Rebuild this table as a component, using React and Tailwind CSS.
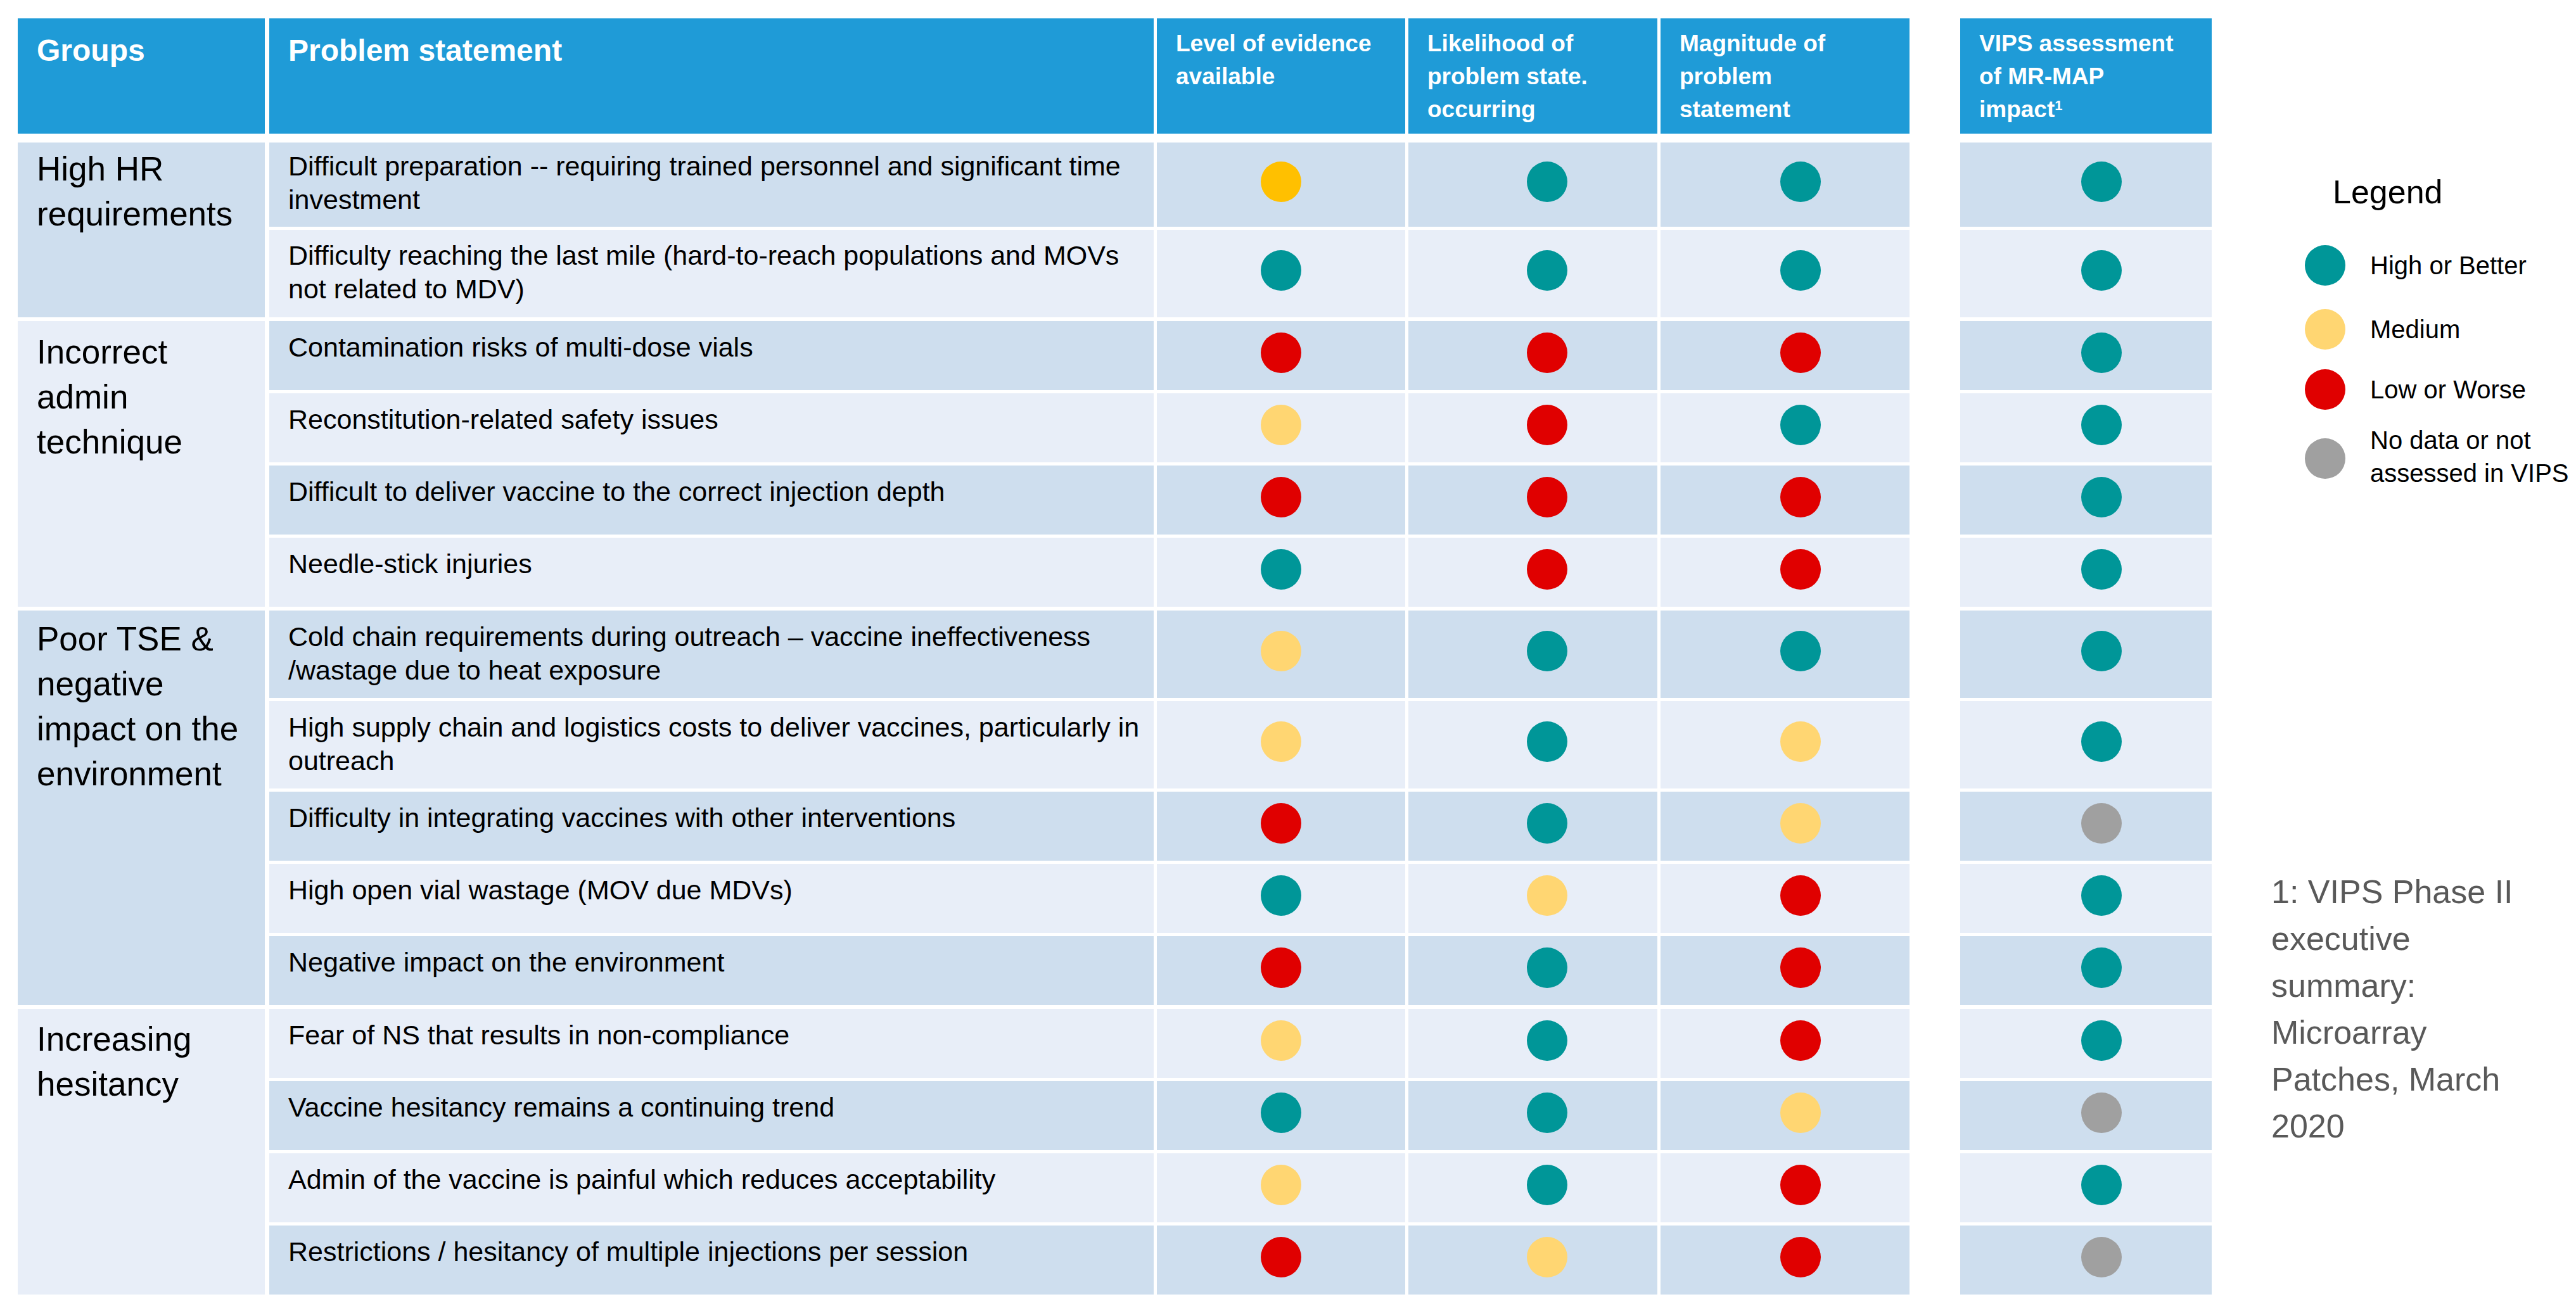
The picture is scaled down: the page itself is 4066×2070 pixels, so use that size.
import React from "react";

const DARK = "bg-[#cedeee]";
const LIGHT = "bg-[#e8eef8]";

const DOT = {
  T: "bg-[#009698]",
  R: "bg-[#e00000]",
  Y: "bg-[#ffd672]",
  B: "bg-[#ffc000]",
  G: "bg-[#a0a0a0]",
};

const H = {
  133: "h-[133px]",
  138: "h-[138px]",
  109: "h-[109px]",
};

const groups = [
  {
    lines: ["High HR", "requirements"],
    pt: "pt-[6px]",
    bg: DARK,
    rows: [
      { text: ["Difficult preparation -- requiring trained personnel and significant time", "investment"], h: 133, pt: "pt-[11px]", d: ["B", "T", "T", "T"] },
      { text: ["Difficulty reaching the last mile (hard-to-reach populations and MOVs", "not related to MDV)"], h: 138, pt: "pt-[14px]", d: ["T", "T", "T", "T"] },
    ],
  },
  {
    lines: ["Incorrect", "admin", "technique"],
    pt: "pt-[13px]",
    bg: LIGHT,
    rows: [
      { text: ["Contamination risks of multi-dose vials"], h: 109, d: ["R", "R", "R", "T"] },
      { text: ["Reconstitution-related safety issues"], h: 109, d: ["Y", "R", "T", "T"] },
      { text: ["Difficult to deliver vaccine to the correct injection depth"], h: 109, d: ["R", "R", "R", "T"] },
      { text: ["Needle-stick injuries"], h: 109, d: ["T", "R", "R", "T"] },
    ],
  },
  {
    lines: ["Poor TSE &", "negative", "impact on the", "environment"],
    pt: "pt-[9px]",
    bg: DARK,
    rows: [
      { text: ["Cold chain requirements during outreach \u2013 vaccine ineffectiveness", "/wastage due to heat exposure"], h: 138, d: ["Y", "T", "T", "T"] },
      { text: ["High supply chain and logistics costs to deliver vaccines, particularly in", "outreach"], h: 138, d: ["Y", "T", "Y", "T"] },
      { text: ["Difficulty in integrating vaccines with other interventions"], h: 109, d: ["R", "T", "Y", "G"] },
      { text: ["High open vial wastage (MOV due MDVs)"], h: 109, d: ["T", "Y", "R", "T"] },
      { text: ["Negative impact on the environment"], h: 109, d: ["R", "T", "R", "T"] },
    ],
  },
  {
    lines: ["Increasing", "hesitancy"],
    pt: "pt-[12px]",
    bg: LIGHT,
    rows: [
      { text: ["Fear of NS that results in non-compliance"], h: 109, d: ["Y", "T", "R", "T"] },
      { text: ["Vaccine hesitancy remains a continuing trend"], h: 109, d: ["T", "T", "Y", "G"] },
      { text: ["Admin of the vaccine is painful which reduces acceptability"], h: 109, d: ["Y", "T", "R", "T"] },
      { text: ["Restrictions / hesitancy of multiple injections per session"], h: 109, d: ["R", "Y", "R", "G"] },
    ],
  },
];

function Dot({ c }) {
  return <div className={`w-[64px] h-[64px] rounded-full shrink-0 ${DOT[c]}`} />;
}

function Row({ row, bg }) {
  return (
    <div className={`flex ${H[row.h]}`}>
      <div className={`w-[1396px] ${bg} pl-[30px] ${row.pt || "pt-[15px]"} text-[43px] leading-[53px] text-black whitespace-nowrap`}>
        {row.text.map((t, i) => (
          <div key={i}>{t}</div>
        ))}
      </div>
      <div className={`ml-[5px] w-[392px] ${bg} flex items-center justify-center pb-[10px]`}>
        <Dot c={row.d[0]} />
      </div>
      <div className={`ml-[5px] w-[393px] ${bg} flex items-center justify-center pb-[10px] pl-[44px]`}>
        <Dot c={row.d[1]} />
      </div>
      <div className={`ml-[5px] w-[393px] ${bg} flex items-center justify-center pb-[10px] pl-[48px]`}>
        <Dot c={row.d[2]} />
      </div>
      <div className={`ml-[80px] w-[397px] ${bg} flex items-center justify-center pb-[10px] pl-[49px]`}>
        <Dot c={row.d[3]} />
      </div>
    </div>
  );
}

function HeadSmall({ w, ml, children }) {
  return (
    <div className={`${w} ${ml} bg-[#1f9bd7] text-white font-bold text-[37px] leading-[52px] pl-[30px] pt-[14px]`}>
      {children}
    </div>
  );
}

export default function App() {
  let rowIndex = 0;
  return (
    <div className="w-[4066px] h-[2070px] bg-white flex font-['Liberation_Sans',Arial,sans-serif] overflow-hidden">
      <div className="pl-[28px] pt-[29px] flex flex-col shrink-0">
        <div className="flex h-[182px]">
          <div className="w-[390px] bg-[#1f9bd7] text-white font-bold text-[48px] leading-[60px] pl-[30px] pt-[21px]">
            Groups
          </div>
          <div className="ml-[7px] w-[1396px] bg-[#1f9bd7] text-white font-bold text-[48px] leading-[60px] pl-[30px] pt-[21px]">
            Problem statement
          </div>
          <HeadSmall w="w-[392px]" ml="ml-[5px]">
            <div>Level of evidence</div>
            <div>available</div>
          </HeadSmall>
          <HeadSmall w="w-[393px]" ml="ml-[5px]">
            <div>Likelihood of</div>
            <div>problem state.</div>
            <div>occurring</div>
          </HeadSmall>
          <HeadSmall w="w-[393px]" ml="ml-[5px]">
            <div>Magnitude of</div>
            <div>problem</div>
            <div>statement</div>
          </HeadSmall>
          <HeadSmall w="w-[397px]" ml="ml-[80px]">
            <div>VIPS assessment</div>
            <div>of MR-MAP</div>
            <div>
              impact<sup className="text-[22px]">1</sup>
            </div>
          </HeadSmall>
        </div>

        <div className="mt-[14px] flex flex-col gap-[6px]">
          {groups.map((g, gi) => (
            <div key={gi} className="flex">
              <div className={`w-[390px] ${g.bg} pl-[30px] ${g.pt} text-[53px] leading-[71px] text-black whitespace-nowrap`}>
                {g.lines.map((l, i) => (
                  <div key={i}>{l}</div>
                ))}
              </div>
              <div className="ml-[7px] flex flex-col gap-[5px]">
                {g.rows.map((r, ri) => {
                  const bg = rowIndex % 2 === 0 ? DARK : LIGHT;
                  rowIndex += 1;
                  return <Row key={ri} row={r} bg={bg} />;
                })}
              </div>
            </div>
          ))}
        </div>
      </div>

      <div className="ml-[94px] pt-[273px] flex flex-col shrink-0 text-black">
        <div className="pl-[97px] text-[52px] leading-[60px]">Legend</div>

        <div className="mt-[54px] pl-[53px] flex items-center">
          <div className="w-[64px] h-[64px] rounded-full bg-[#009698] shrink-0" />
          <div className="ml-[39px] text-[40px] leading-[52px] whitespace-nowrap">High or Better</div>
        </div>
        <div className="mt-[37px] pl-[53px] flex items-center">
          <div className="w-[64px] h-[64px] rounded-full bg-[#ffd672] shrink-0" />
          <div className="ml-[39px] text-[40px] leading-[52px] whitespace-nowrap">Medium</div>
        </div>
        <div className="mt-[31px] pl-[53px] flex items-center">
          <div className="w-[64px] h-[64px] rounded-full bg-[#e00000] shrink-0" />
          <div className="ml-[39px] text-[40px] leading-[52px] whitespace-nowrap">Low or Worse</div>
        </div>
        <div className="mt-[22px] pl-[53px] flex items-center">
          <div className="w-[64px] h-[64px] rounded-full bg-[#a0a0a0] shrink-0 mt-[6px]" />
          <div className="ml-[39px] text-[40px] leading-[52px] whitespace-nowrap">
            <div>No data or not</div>
            <div>assessed in VIPS</div>
          </div>
        </div>

        <div className="mt-[598px] text-[52px] leading-[74px] text-[#595959] whitespace-nowrap">
          <div>1: VIPS Phase II</div>
          <div>executive</div>
          <div>summary:</div>
          <div>Microarray</div>
          <div>Patches, March</div>
          <div>2020</div>
        </div>
      </div>
    </div>
  );
}
